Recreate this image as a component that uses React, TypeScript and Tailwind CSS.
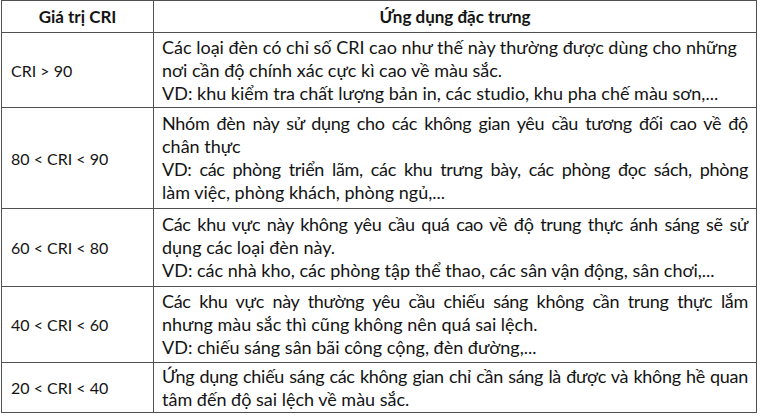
const rows: { cri: string; lines: { text: string; justify?: boolean }[] }[] = [
  {
    cri: "CRI > 90",
    lines: [
      { text: "Các loại đèn có chỉ số CRI cao như thế này thường được dùng cho những" },
      { text: "nơi cần độ chính xác cực kì cao về màu sắc." },
      { text: "VD: khu kiểm tra chất lượng bản in, các studio, khu pha chế màu sơn,..." },
    ],
  },
  {
    cri: "80 < CRI < 90",
    lines: [
      { text: "Nhóm đèn này sử dụng cho các không gian yêu cầu tương đối cao về độ", justify: true },
      { text: "chân thực" },
      { text: "VD: các phòng triển lãm, các khu trưng bày, các phòng đọc sách, phòng", justify: true },
      { text: "làm việc, phòng khách, phòng ngủ,..." },
    ],
  },
  {
    cri: "60 < CRI < 80",
    lines: [
      { text: "Các khu vực này không yêu cầu quá cao về độ trung thực ánh sáng sẽ sử", justify: true },
      { text: "dụng các loại đèn này." },
      { text: "VD: các nhà kho, các phòng tập thể thao, các sân vận động, sân chơi,..." },
    ],
  },
  {
    cri: "40 < CRI < 60",
    lines: [
      { text: "Các khu vực này thường yêu cầu chiếu sáng không cần trung thực lắm", justify: true },
      { text: "nhưng màu sắc thì cũng không nên quá sai lệch." },
      { text: "VD: chiếu sáng sân bãi công cộng, đèn đường,..." },
    ],
  },
  {
    cri: "20 < CRI < 40",
    lines: [
      { text: "Ứng dụng chiếu sáng các không gian chỉ cần sáng là được và không hề quan", justify: true },
      { text: "tâm đến độ sai lệch về màu sắc." },
    ],
  },
]

const heights = ["h-[75px]", "h-[101px]", "h-[78px]", "h-[76px]", "h-[50px]"]

export default function App() {
  return (
    <div className="w-[762px] h-[418px] bg-white pl-px text-[#141414] font-['Lato','Noto_Sans',sans-serif] leading-[23px]">
      <table className="w-[756px] border-collapse table-fixed">
        <thead>
          <tr className="h-[32px] text-[17px]">
            <th className="w-[152px] border border-[#505050] font-bold text-center align-middle">Giá trị CRI</th>
            <th className="border border-[#505050] font-bold text-center align-middle">Ứng dụng đặc trưng</th>
          </tr>
        </thead>
        <tbody>
          {rows.map((row, i) => (
            <tr key={row.cri} className={heights[i]}>
              <td className="border border-[#505050] align-middle pl-[9px] text-[16px]">{row.cri}</td>
              <td className="border border-[#505050] align-middle pl-[8px] pr-[8px] text-[18px]">
                {row.lines.map((line, j) => (
                  <div
                    key={j}
                    className={
                      line.justify
                        ? "whitespace-nowrap tracking-[-0.3px] text-justify [text-align-last:justify]"
                        : "whitespace-nowrap"
                    }
                  >
                    {line.text}
                  </div>
                ))}
              </td>
            </tr>
          ))}
        </tbody>
      </table>
    </div>
  )
}
